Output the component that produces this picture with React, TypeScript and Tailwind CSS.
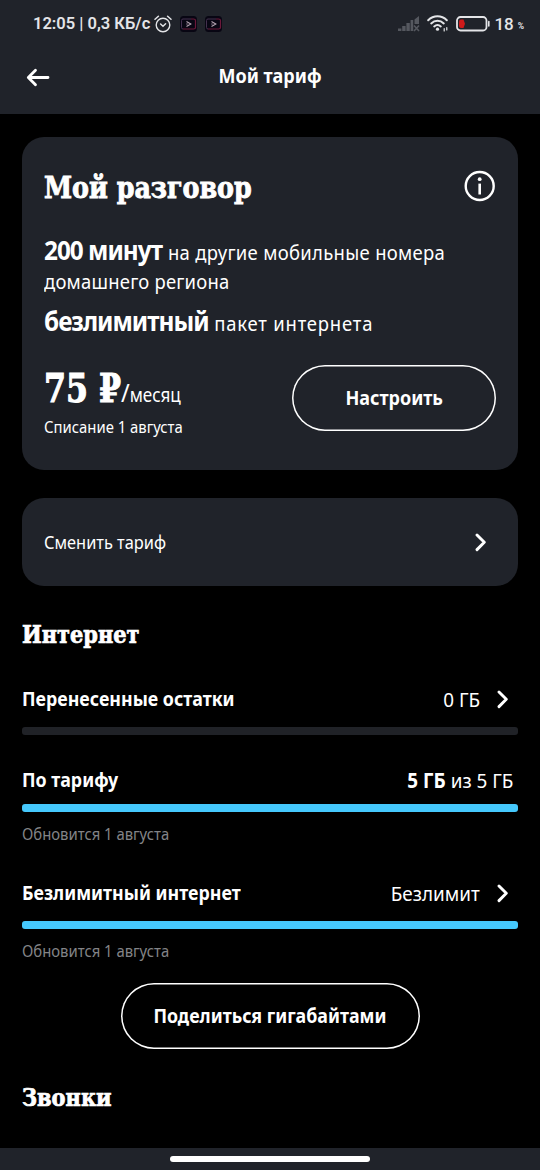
import type { ReactNode } from 'react';

interface UsageRowProps {
  title: ReactNode;
  value: ReactNode;
  percent: number;
  hasDetails?: boolean;
}

function ChevronIcon() {
  return (
    <svg width="12" height="19" viewBox="0 0 12 19" fill="none" className="shrink-0">
      <path d="M2 2L9.3 9.3L2 16.6" stroke="white" strokeWidth="2.9" strokeLinecap="round" strokeLinejoin="round" />
    </svg>
  );
}

function AlarmIcon() {
  return (
    <svg width="18" height="18" viewBox="0 0 18 18" fill="none" stroke="#e4e5e8" strokeLinecap="round">
      <circle cx="9" cy="10" r="6.8" strokeWidth="1.4" />
      <path d="M1 4.2L4.4 1.2M17 4.2L13.6 1.2" strokeWidth="1.5" />
      <path d="M6.6 9L9 11.2L11.6 8.8" strokeWidth="1.5" />
    </svg>
  );
}

function VideoIcon() {
  return (
    <svg width="17" height="16" viewBox="0 0 17 16" fill="none">
      <rect width="17" height="16" rx="3.5" fill="#080613" />
      <path d="M3 13H13.5Q15.5 13 15.5 11.5V4.5Q15.5 3 13.5 3H11" stroke="#6b1839" strokeWidth="1.2" />
      <path d="M11 3H3Q1.5 3 1.5 4.5V11.5Q1.5 13 3 13" stroke="#43314e" />
      <path d="M6.5 5.6L10.8 8L6.5 10.4" stroke="#b3a3b0" strokeWidth="1.1" />
      <path d="M6 8H8" stroke="#8f7f8f" strokeWidth="0.8" />
    </svg>
  );
}

function SignalIcon() {
  return (
    <svg width="22" height="16" viewBox="0 0 22 16" fill="#55585f">
      <rect x="0" y="12.5" width="3.4" height="2.5" />
      <rect x="4.2" y="10" width="3.4" height="5" />
      <rect x="8.4" y="7" width="3.4" height="8" />
      <rect x="12.6" y="4" width="2.6" height="11" />
      <path d="M16.5 3.5L21 0V8H16.5Z" />
      <path d="M16 9.5L21 15M21 9.5L16 15" stroke="#55585f" strokeWidth="1.6" />
    </svg>
  );
}

function WifiIcon() {
  return (
    <svg width="22" height="17" viewBox="0 0 22 17" fill="none" stroke="#e4e5e8" strokeLinecap="round">
      <path d="M1.2 5.2C6.5 0 14.5 0 19.8 5.2" strokeWidth="2" />
      <path d="M4.2 8.4C7.8 5 13.2 5 16.8 8.4" strokeWidth="2" />
      <path d="M7.2 11.4C9.3 9.6 11.7 9.6 13.8 11.4" strokeWidth="2" />
      <circle cx="10.5" cy="14.2" r="1.6" fill="#e4e5e8" stroke="none" />
      <path d="M17.2 13.5V16M19.8 12.5V15" strokeWidth="1.2" />
    </svg>
  );
}

function BatteryIcon() {
  return (
    <svg width="34" height="16" viewBox="0 0 34 16" fill="none">
      <rect x="1" y="1" width="29.5" height="13.5" rx="3.5" stroke="#e4e5e8" strokeWidth="1.8" />
      <path d="M5 3.5H7.5L9 7.7L7.5 12H5Q3 12 3 10V5.5Q3 3.5 5 3.5Z" fill="#cf1a1a" />
      <path d="M32.8 5.5V10" stroke="#e4e5e8" strokeWidth="1.6" strokeLinecap="round" />
    </svg>
  );
}

function StatusBar() {
  return (
    <div className="flex h-[47px] items-center justify-between pr-4 pl-[33px] font-['Roboto',sans-serif] text-[#e4e5e8]">
      <div className="flex items-center">
        <span className="pt-0.5 text-[16.5px] font-semibold whitespace-nowrap">12:05 | 0,3 КБ/с</span>
        <div className="ml-1 flex items-center gap-2">
          <AlarmIcon />
          <VideoIcon />
          <VideoIcon />
        </div>
      </div>
      <div className="flex items-center">
        <SignalIcon />
        <span className="ml-[7px]"><WifiIcon /></span>
        <span className="ml-[7px]"><BatteryIcon /></span>
        <span className="ml-1 pt-0.5 text-[17px] font-medium">18</span>
        <span className="mt-1.5 ml-1 text-[8.5px] font-bold">%</span>
      </div>
    </div>
  );
}

// Заголовки с брусковыми засечками
function SlabHeading({ children }: { children: ReactNode }) {
  return (
    <h2 className="mt-7 h-10 origin-left scale-x-[0.93] pt-px font-['DejaVu_Serif',serif] text-[25px] leading-10 font-bold font-stretch-condensed [-webkit-text-stroke:0.7px_white]">
      {children}
    </h2>
  );
}

function UsageRow({ title, value, percent, hasDetails }: UsageRowProps) {
  return (
    <div>
      <div className="flex h-[30px] items-center justify-between">
        <h3 className="origin-left scale-x-[0.89] text-[20px] font-bold whitespace-nowrap">{title}</h3>
        <div className={hasDetails ? 'flex items-center gap-[17px] pr-[9px]' : 'flex items-center pr-[5px]'}>
          <span className="origin-right scale-x-[0.92] pt-px text-[20.5px] whitespace-nowrap">{value}</span>
          {hasDetails && <ChevronIcon />}
        </div>
      </div>
      <div className={hasDetails ? 'mt-[13px] h-2 overflow-hidden rounded-[3px] bg-[#202227]' : 'mt-[9px] h-2 overflow-hidden rounded-[3px] bg-[#202227]'}>
        <div className="h-full bg-[#45c8fc]" style={{ width: `${percent}%` }} />
      </div>
    </div>
  );
}

function RenewalNote() {
  return (
    <p className="mt-2 h-7 origin-left scale-x-90 text-[16.5px] leading-7 text-[#838487]">Обновится 1 августа</p>
  );
}

export default function App() {
  return (
    <div className="flex h-[1170px] w-[540px] flex-col overflow-hidden bg-black font-['Noto_Sans',sans-serif] text-white">
      <header className="h-[114px] shrink-0 bg-[#20232a]">
        <StatusBar />
        <div className="grid h-[58px] grid-cols-[80px_1fr_80px] items-center">
          <svg width="24" height="19" viewBox="0 0 24 19" fill="none" className="mt-0.5 ml-[26px]">
            <path d="M22 9.5H3M9.5 2.2L2.3 9.5L9.5 16.8" stroke="white" strokeWidth="2.8" strokeLinecap="round" strokeLinejoin="round" />
          </svg>
          <h1 className="scale-x-90 text-center text-[20px] font-bold">Мой тариф</h1>
        </div>
      </header>

      <main className="flex flex-1 flex-col px-[22px] pt-[23px]">
        {/* Текущий тариф */}
        <section className="h-[333px] shrink-0 rounded-[22px] bg-[#20232a] px-[22px]">
          <div className="flex h-[98px] items-center justify-between">
            <h2 className="origin-left scale-x-[0.94] pt-[3px] font-['DejaVu_Serif',serif] text-[30px] font-bold whitespace-nowrap font-stretch-condensed [-webkit-text-stroke:0.8px_white]">
              Мой разговор
            </h2>
            <svg width="32" height="32" viewBox="0 0 32 32" fill="none">
              <circle cx="15.7" cy="16" r="14" stroke="white" strokeWidth="2.4" />
              <circle cx="15.7" cy="9.2" r="1.9" fill="white" />
              <path d="M15.7 13.6V24.5" stroke="white" strokeWidth="2.6" />
            </svg>
          </div>
          <div className="origin-left scale-x-90 text-[20.5px] leading-[30px] tracking-[0.35px] whitespace-nowrap">
            <p className="h-[30px]">
              <b className="mr-px text-[27px] tracking-[-1.1px]">200 минут</b> на другие мобильные номера
            </p>
            <p className="h-[30px] pt-px tracking-[0.25px]">домашнего региона</p>
            <p className="mt-[11px] h-[30px] tracking-[0.9px]">
              <b className="text-[27px] tracking-[-1.1px]">безлимитный</b> пакет интернета
            </p>
          </div>
          <div className="mt-[29px] flex justify-between">
            <div className="origin-left scale-x-90">
              <div className="flex h-12 items-baseline leading-[47px] whitespace-nowrap">
                <span className="font-['DejaVu_Serif',serif] text-[39px] font-bold font-stretch-condensed [-webkit-text-stroke:1px_white]">75 ₽</span>
                <span className="text-[26px]">/</span>
                <span className="text-[19px]">месяц</span>
              </div>
              <p className="mt-px text-[16.5px] leading-[26px] whitespace-nowrap">Списание 1 августа</p>
            </div>
            <button className="h-[66px] w-[204px] shrink-0 rounded-full text-[20px] font-bold shadow-[inset_0_0_0_1.5px_#fff]">
              <span className="inline-block scale-x-90">Настроить</span>
            </button>
          </div>
        </section>

        <button className="mt-7 flex h-[88px] shrink-0 items-center justify-between rounded-[22px] bg-[#20232a] pr-[31px] pl-[22px]">
          <span className="origin-left scale-x-[0.91] text-[18px]">Сменить тариф</span>
          <ChevronIcon />
        </button>

        {/* Остатки интернета */}
        <SlabHeading>Интернет</SlabHeading>
        <div className="mt-[30px]">
          <UsageRow title="Перенесенные остатки" value="0 ГБ" percent={0} hasDetails />
        </div>
        <div className="mt-[30px]">
          <UsageRow title="По тарифу" value={<><b>5 ГБ</b> из 5 ГБ</>} percent={100} />
        </div>
        <RenewalNote />
        <div className="mt-[30px]">
          <UsageRow title="Безлимитный интернет" value="Безлимит" percent={100} hasDetails />
        </div>
        <RenewalNote />
        <button className="mt-[18px] h-[66px] w-[299px] shrink-0 self-center rounded-full text-[20px] font-bold whitespace-nowrap shadow-[inset_0_0_0_1.5px_#fff]">
          <span className="inline-block scale-x-[0.89]">Поделиться гигабайтами</span>
        </button>

        <SlabHeading>Звонки</SlabHeading>
      </main>

      <footer className="flex h-[22px] shrink-0 justify-center bg-[#20232a] pt-2">
        <div className="h-[6px] w-[200px] rounded-full bg-white" />
      </footer>
    </div>
  );
}
